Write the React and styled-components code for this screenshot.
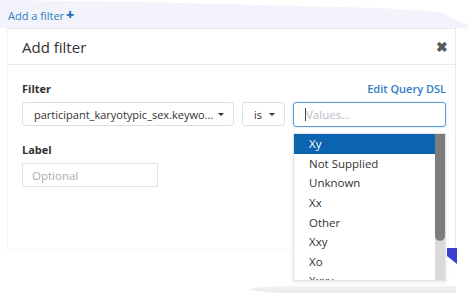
import styled, { createGlobalStyle } from "styled-components";

const Global = createGlobalStyle`
	body {
		margin: 0;
		background: #fff;
		font-family: "Open Sans", "Liberation Sans", sans-serif;
		color: #333;
	}
`;

const Page = styled.div`
	position: relative;
	width: 468px;
	height: 299px;
	overflow: hidden;
	background: #fff;
`;

const TopBand = styled.div`
	height: 28px;
	display: flex;
	align-items: center;
	padding-left: 8px;
	background: #f3f4fb;
	clip-path: polygon(0 0, 140px 2px, 380px 8px, 440px 12px, 462px 23px, 468px 24px, 468px 28px, 0 28px);
`;

const AddLink = styled.a`
	font-size: 11px;
	color: #2f7dc3;
	text-decoration: none;
	display: flex;
	align-items: center;
	gap: 2px;
	margin-top: 2px;
`;

const Plus = styled.span`
	font-weight: 800;
	font-size: 14px;
	line-height: 1;
	color: #1f6fb8;
`;

const Modal = styled.div`
	margin: 0 12px 0 7px;
	height: 220px;
	border: 1px solid #e7e8f0;
	border-bottom-color: #f6f7f9;
	border-left-color: #f1f2f6;
	background: #fff;
`;

const Header = styled.div`
	height: 35px;
	display: flex;
	align-items: center;
	justify-content: space-between;
	padding: 0 7px 0 14px;
	border-bottom: 1px solid #e9eaf0;
`;

const Title = styled.h2`
	margin: 0;
	font-size: 15px;
	font-weight: 400;
	color: #333;
`;

const Close = styled.span`
	font-size: 14px;
	font-weight: 700;
	color: #555a60;
`;

const Body = styled.div`
	padding: 15px 9px 0 14px;
`;

const LabelRow = styled.div`
	display: flex;
	justify-content: space-between;
	align-items: center;
	height: 16px;
`;

const FieldLabel = styled.label`
	font-size: 11px;
	font-weight: 700;
	color: #333;
`;

const DslLink = styled.a`
	font-size: 11px;
	font-weight: 600;
	color: #2f7dc3;
`;

const Controls = styled.div`
	display: flex;
	gap: 8px;
	margin-top: 6px;
	margin-bottom: 14px;
	position: relative;
`;

const Select = styled.div`
	width: ${(p) => p.$w}px;
	height: 24px;
	box-sizing: border-box;
	border: 1px solid #dcdfe5;
	border-radius: 3px;
	display: flex;
	align-items: center;
	justify-content: space-between;
	padding: 0 9px 0 11px;
	font-size: 11px;
	color: #333;
	white-space: nowrap;
`;

const Caret = styled.span`
	width: 0;
	height: 0;
	border-left: 3px solid transparent;
	border-right: 3px solid transparent;
	border-top: 3.5px solid #333;
`;

const ValuesInput = styled.div`
	flex: 1;
	height: 25px;
	box-sizing: border-box;
	border: 1px solid #5b9bd5;
	border-radius: 3px;
	box-shadow: 0 0 2px rgba(91, 155, 213, 0.5);
	display: flex;
	align-items: center;
	padding-left: 11px;
	font-size: 11.5px;
	color: #b8bcc2;
`;

const Cursor = styled.span`
	width: 1px;
	height: 13px;
	background: #444;
`;

const OptionalInput = styled.div`
	width: 136px;
	height: 24px;
	box-sizing: border-box;
	border: 1px solid #e0e2e6;
	margin-top: 6px;
	display: flex;
	align-items: center;
	padding-left: 9px;
	font-size: 11.5px;
	color: #a9adb2;
`;

const Menu = styled.div`
	position: absolute;
	left: 293px;
	top: 133px;
	width: 153px;
	height: 148px;
	overflow: hidden;
	background: #fff;
	border: 1px solid #e3e5ea;
	box-sizing: border-box;
	box-shadow: 0 2px 4px rgba(0, 0, 0, 0.08);
	display: flex;
`;

const List = styled.ul`
	list-style: none;
	margin: 0;
	padding: 0;
	flex: 1;
`;

const Item = styled.li`
	height: 19.6px;
	display: flex;
	align-items: center;
	padding-left: 15px;
	font-size: 11.5px;
	background: ${(p) => (p.$active ? "#0d64b0" : "transparent")};
	color: ${(p) => (p.$active ? "#fff" : "#333")};
`;

const Track = styled.div`
	width: 10px;
	background: #dadada;
	display: flex;
	flex-direction: column;
`;

const Thumb = styled.div`
	height: 107px;
	background: #7c7e7c;
	border-radius: 0 0 5px 5px;
`;

const Corner = styled.svg`
	position: absolute;
	left: 446px;
	top: 248px;
`;

const Shadow = styled.div`
	position: absolute;
	left: 250px;
	top: 286px;
	width: 206px;
	height: 7px;
	background: linear-gradient(#f2f2f4, #e9e9ec);
	border-radius: 50% 0 0 50% / 100% 0 0 100%;
`;

const values = ["Xy", "Not Supplied", "Unknown", "Xx", "Other", "Xxy", "Xo", "Xxxy"];

export default function App() {
	return (
		<Page>
			<Global />
			<TopBand>
				<AddLink>
					Add a filter <Plus>+</Plus>
				</AddLink>
			</TopBand>
			<Modal>
				<Header>
					<Title>Add filter</Title>
					<Close>✖</Close>
				</Header>
				<Body>
					<LabelRow>
						<FieldLabel>Filter</FieldLabel>
						<DslLink>Edit Query DSL</DslLink>
					</LabelRow>
					<Controls>
						<Select $w={212}>
							participant_karyotypic_sex.keywo... <Caret />
						</Select>
						<Select $w={43}>
							is <Caret />
						</Select>
						<ValuesInput>
							<Cursor />
							Values...
						</ValuesInput>
					</Controls>
					<LabelRow>
						<FieldLabel>Label</FieldLabel>
					</LabelRow>
					<OptionalInput>Optional</OptionalInput>
				</Body>
			</Modal>
			<Menu>
				<List>
					{values.map((v, i) => (
						<Item key={v} $active={i === 0}>
							{v}
						</Item>
					))}
				</List>
				<Track>
					<Thumb />
				</Track>
			</Menu>
			<Corner width="11" height="16" viewBox="0 0 11 16">
				<polygon points="1,0 11,0 11,16 1,8" fill="#3a3fcf" />
			</Corner>
			<Shadow />
		</Page>
	);
}
